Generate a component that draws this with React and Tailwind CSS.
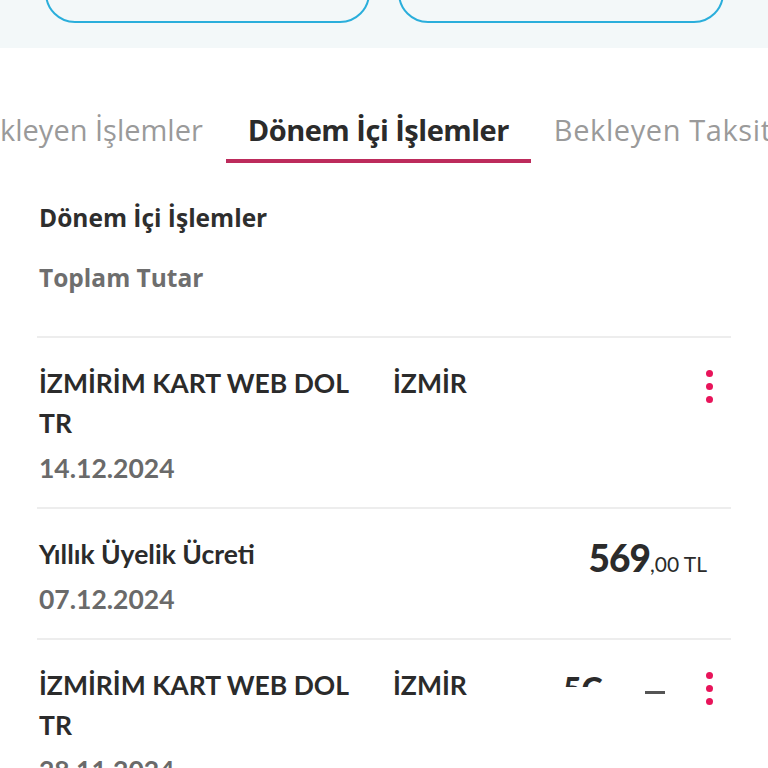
import React from 'react'

const rows = [
  { title: 'İZMİRİM KART WEB DOL', city: 'İZMİR', second: 'TR', date: '14.12.2024', menu: true },
  { title: 'Yıllık Üyelik Ücreti', date: '07.12.2024', amount: ['569', ',00 TL'] },
  { title: 'İZMİRİM KART WEB DOL', city: 'İZMİR', second: 'TR', date: '28.11.2024', menu: true, hidden: true },
]

function Dots() {
  return (
    <div className="flex flex-col items-center gap-[6px] pt-[7px]">
      <span className="w-[7px] h-[7px] rounded-full bg-[#e8145a]" />
      <span className="w-[7px] h-[7px] rounded-full bg-[#e8145a]" />
      <span className="w-[7px] h-[7px] rounded-full bg-[#e8145a]" />
    </div>
  )
}

export default function App() {
  return (
    <div className="w-[768px] h-[768px] overflow-hidden bg-white" style={{ fontFamily: 'Lato, "Open Sans", sans-serif' }}>
      {/* top buttons */}
      <div className="h-[48px] bg-[#f3f8f9] flex gap-[28px] pl-[45px] overflow-hidden">
        <div className="w-[325px] h-[60px] -mt-[37px] rounded-[40px] border-2 border-[#2aaedb] shrink-0" />
        <div className="w-[326px] h-[60px] -mt-[37px] rounded-[40px] border-2 border-[#2aaedb] shrink-0" />
      </div>

      {/* tabs */}
      <div className="mt-[58px] flex whitespace-nowrap overflow-hidden text-[29px] leading-[48px]" style={{ fontFamily: '"Open Sans", Lato, sans-serif' }}>
        <div className="shrink-0 -ml-[35px] pr-[23px] text-[#9a9a9a]">Bekleyen İşlemler</div>
        <div className="shrink-0 pb-[5px] font-bold text-[#2b2b2b] border-b-4 border-[#bd2b5c] w-[305px] text-center tracking-[-0.5px]">Dönem İçi İşlemler</div>
        <div className="shrink-0 pl-[23px] text-[#9a9a9a] tracking-[0.6px]">Bekleyen Taksitler</div>
      </div>

      <div className="mx-[37px]">
        <div className="pl-[2px] pt-[39px] pb-[42px]" style={{ fontFamily: '"Open Sans", Lato, sans-serif' }}>
          <div className="text-[24.5px] font-bold text-[#2e2e2e] leading-[32px]">Dönem İçi İşlemler</div>
          <div className="mt-[28px] text-[24.5px] font-bold text-[#6e6e6e] leading-[32px]">Toplam Tutar</div>
        </div>

        {rows.map((r, i) => (
          <div key={i} className="border-t-2 border-[#ededed] pl-[2px] pr-[18px] pt-[25px] pb-[19px] flex">
            <div className="flex-1">
              <div className="flex h-[40px]">
                <div className="w-[354px] text-[26.5px] font-bold text-[#2b2b2b] leading-[40px]">{r.title}</div>
                {r.city && <div className="text-[26.5px] font-bold text-[#2b2b2b] leading-[40px]">{r.city}</div>}
                <div className="flex-1" />
                {r.amount && (
                  <div className="h-[40px] flex items-baseline text-[#2b2b2b] leading-[48px] pr-[6px] whitespace-nowrap">
                    <span className="text-[37px] font-black tracking-[-1px]">{r.amount[0]}</span>
                    <span className="text-[21px]">{r.amount[1]}</span>
                  </div>
                )}
                {r.hidden && (
                  <div className="relative w-[120px] h-[40px] mr-[25px]">
                    <span className="absolute left-[2px] top-[8px] h-[14px] overflow-hidden text-[32px] font-black leading-[32px] text-[#2b2b2b]">5C</span>
                    <span className="absolute left-[84px] top-[26px] w-[20px] h-[3px] bg-[#555]" />
                  </div>
                )}
              </div>
              {r.second && <div className="text-[26.5px] font-bold text-[#2b2b2b] leading-[40px]">{r.second}</div>}
              <div className="text-[26.5px] font-bold text-[#6a6a6a] leading-[40px] mt-[5px]">{r.date}</div>
            </div>
            {r.menu && <Dots />}
          </div>
        ))}
      </div>
    </div>
  )
}
